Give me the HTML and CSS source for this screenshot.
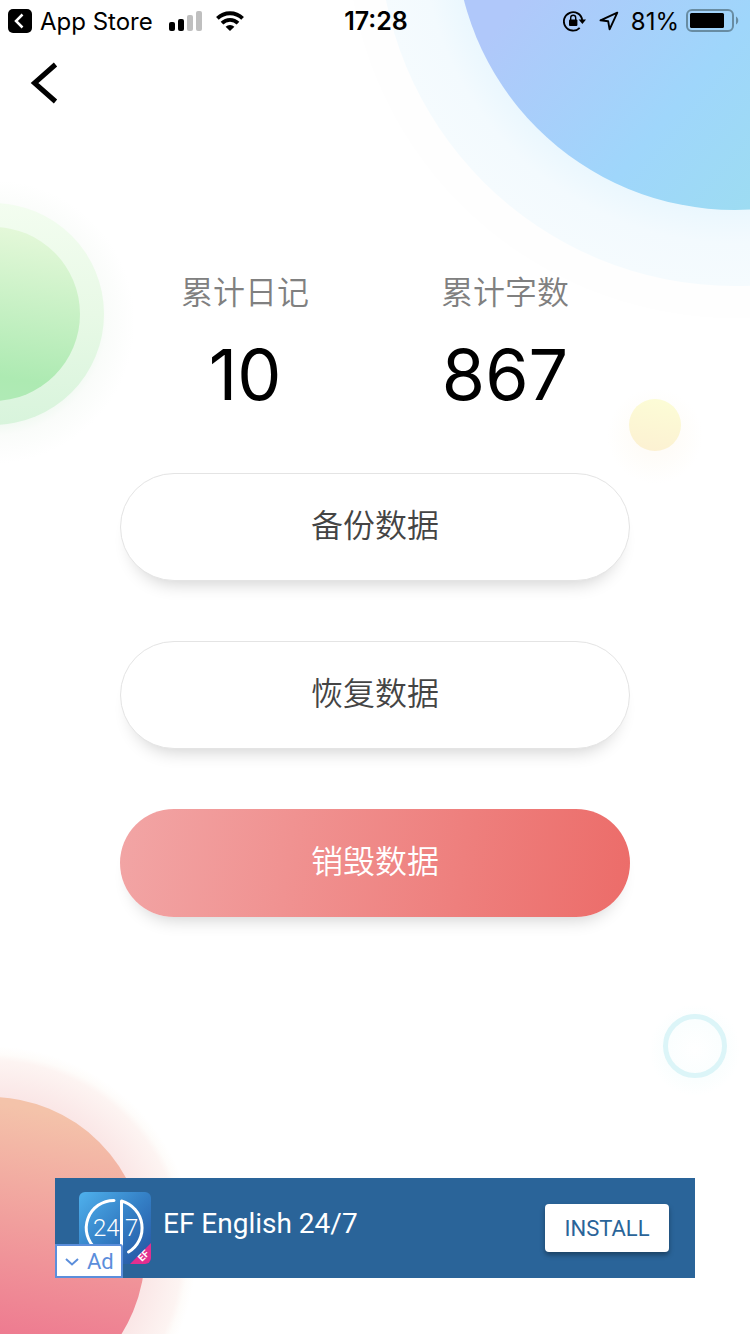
FILE: index.html
```html
<!DOCTYPE html>
<html lang="zh-CN">
<head>
<meta charset="utf-8">
<meta name="viewport" content="width=device-width, initial-scale=1">
<title>数据</title>
<link rel="stylesheet" href="styles.css">
</head>
<body>
<div class="app">
  <svg class="backdrop" viewBox="0 0 750 1334" preserveAspectRatio="xMidYMid slice" aria-hidden="true">
    <defs>
      <linearGradient id="blue" gradientUnits="userSpaceOnUse" x1="520" y1="0" x2="760" y2="200">
        <stop offset="0" stop-color="#b0c8fa"/><stop offset=".6" stop-color="#9fd6fb"/><stop offset="1" stop-color="#9ddcf2"/>
      </linearGradient>
      <radialGradient id="blueHalo" gradientUnits="userSpaceOnUse" cx="735" cy="-70" r="356">
        <stop offset=".78" stop-color="#eaf7fe"/><stop offset=".88" stop-color="#f3fafe"/><stop offset="1" stop-color="#f5fbfe"/>
      </radialGradient>
      <linearGradient id="green" x1=".6" y1="0" x2=".45" y2="1">
        <stop offset="0" stop-color="#e4f8d9"/><stop offset=".85" stop-color="#adeab2"/><stop offset="1" stop-color="#b0eab6"/>
      </linearGradient>
      <linearGradient id="greenHalo" x1=".5" y1="0" x2=".5" y2="1">
        <stop offset="0" stop-color="#f3fdf0"/><stop offset=".5" stop-color="#e8f9e6"/><stop offset="1" stop-color="#d8f4dc"/>
      </linearGradient>
      <radialGradient id="greenGlow">
        <stop offset=".7" stop-color="#f0f9f1"/><stop offset=".8" stop-color="#fafcfa"/><stop offset="1" stop-color="#fff"/>
      </radialGradient>
      <linearGradient id="yellow" x1=".6" y1="0" x2=".4" y2="1">
        <stop offset="0" stop-color="#fcfcd6"/><stop offset="1" stop-color="#fcf1d2"/>
      </linearGradient>
      <radialGradient id="yellowGlow">
        <stop offset=".4" stop-color="#fefcf8"/><stop offset="1" stop-color="#fff"/>
      </radialGradient>
      <linearGradient id="red" gradientUnits="userSpaceOnUse" x1="40" y1="1110" x2="0" y2="1334">
        <stop offset="0" stop-color="#f4c3aa"/><stop offset="1" stop-color="#ee7b90"/>
      </linearGradient>
      <radialGradient id="redHalo" gradientUnits="userSpaceOnUse" cx="-10" cy="1252" r="206">
        <stop offset=".75" stop-color="#fae6e6"/><stop offset=".93" stop-color="#fdf4f2"/><stop offset=".96" stop-color="#fefcfa"/><stop offset="1" stop-color="#fff"/>
      </radialGradient>
      <radialGradient id="ringGlow">
        <stop offset="0" stop-color="#fff"/><stop offset=".65" stop-color="#fafefe"/><stop offset="1" stop-color="#fff"/>
      </radialGradient>
    </defs>
    <circle cx="735" cy="-70" r="388" fill="#fefefe"/>
    <circle cx="735" cy="-70" r="356" fill="url(#blueHalo)"/>
    <circle cx="735" cy="-70" r="280" fill="url(#blue)"/>
    <circle cx="-7" cy="322" r="142" fill="url(#greenGlow)"/>
    <circle cx="-7" cy="314" r="111" fill="url(#greenHalo)"/>
    <circle cx="-7" cy="314" r="87" fill="url(#green)"/>
    <circle cx="655" cy="436" r="48" fill="url(#yellowGlow)"/>
    <circle cx="655" cy="425" r="26" fill="url(#yellow)"/>
    <circle cx="695" cy="1050" r="46" fill="url(#ringGlow)"/>
    <circle cx="695" cy="1046" r="29.5" fill="none" stroke="#dcf5f8" stroke-width="5"/>
    <circle cx="-10" cy="1252" r="206" fill="url(#redHalo)"/>
    <circle cx="-10" cy="1252" r="155" fill="url(#red)"/>
  </svg>

  <header class="status">
    <div class="status-side">
      <svg width="24" height="24" viewBox="0 0 24 24" aria-hidden="true"><rect width="24" height="24" rx="5"/><path d="M14.500 5.500 8 12l6.500 6.500" fill="none" stroke="#fff" stroke-width="2.500"/></svg>
      <span class="status-app">App Store</span>
      <svg class="signal" width="34" height="20" viewBox="0 0 34 20" aria-hidden="true"><rect y="11" width="6" height="9" rx="2"/><rect x="9" y="8" width="6" height="12" rx="2"/><g fill="#bfbfbf"><rect x="18" y="4" width="6" height="16" rx="2"/><rect x="27" width="6" height="20" rx="2"/></g></svg>
      <svg class="wifi" width="28" height="20" viewBox="0 0 28 20" aria-hidden="true"><g fill="none" stroke="#000" stroke-width="3.800"><path d="M1.400 7.400a18 18 0 0 1 25.200 0"/><path d="M6 12.200a11.400 11.400 0 0 1 16 0"/></g><path d="m14 20-4.400-4.200a6.200 6.200 0 0 1 8.800 0z"/></svg>
    </div>
    <time class="status-time">17:28</time>
    <div class="status-side status-end">
      <svg width="24" height="22" viewBox="0 0 24 22" aria-hidden="true"><path d="M16.700 17.800A9.200 9.200 0 1 1 19.200 10" fill="none" stroke="#000" stroke-width="1.900"/><path d="M15.600 9.500h7.400l-3.600 4.500z"/><rect x="6" y="9.500" width="8.400" height="6.500" rx="1"/><path d="M7.700 10V7.800a2.500 2.500 0 0 1 5 0V10" fill="none" stroke="#000" stroke-width="1.400"/></svg>
      <svg class="locate" width="20" height="20" viewBox="0 0 20 20" aria-hidden="true"><path d="M18.300 1.700 1.500 9.300l7.700 1 1.400 8z" fill="none" stroke="#000" stroke-width="1.900" stroke-linejoin="round"/></svg>
      <span class="status-percent">81%</span>
      <svg width="54" height="24" viewBox="0 0 54 24" aria-hidden="true"><rect x="1" y="1" width="46" height="21" rx="5" fill="none" stroke="#688ca2" stroke-width="2"/><rect x="4" y="4" width="34" height="15" rx="1.500"/><path d="M50 7.500c3 1.500 3 6.500 0 8z" fill="#688ca2"/></svg>
    </div>
  </header>

  <nav class="nav">
    <button class="back" type="button" aria-label="返回"><svg width="28" height="42" viewBox="0 0 28 42" aria-hidden="true"><path d="M25.500 2.500 4.500 21l21 18.500" fill="none" stroke="#000" stroke-width="5"/></svg></button>
  </nav>

  <main class="main">
    <dl class="stats">
      <div class="stat"><dt class="stat-label">累计日记</dt><dd class="stat-value">10</dd></div>
      <div class="stat"><dt class="stat-label">累计字数</dt><dd class="stat-value">867</dd></div>
    </dl>
    <div class="actions">
      <button class="action" type="button">备份数据</button>
      <button class="action" type="button">恢复数据</button>
      <button class="action action-danger" type="button">销毁数据</button>
    </div>
  </main>

  <aside class="banner">
    <svg class="banner-icon" width="72" height="72" viewBox="0 0 72 72" aria-hidden="true">
      <defs>
        <linearGradient id="tile" x1="0" y1="0" x2="1" y2="1"><stop offset="0" stop-color="#4fb1ed"/><stop offset=".5" stop-color="#347fc5"/><stop offset="1" stop-color="#2452a0"/></linearGradient>
        <clipPath id="tileClip"><rect width="72" height="72" rx="6"/></clipPath>
      </defs>
      <g clip-path="url(#tileClip)">
        <rect width="72" height="72" fill="url(#tile)"/>
        <path d="M72 51v21H51z" fill="#e22f8f"/>
      </g>
      <path d="M35 8.500A27.500 27.500 0 0 0 17 57M42.500 60V9A28 28 0 0 1 49.500 60" fill="none" stroke="#fff" stroke-width="3" stroke-linecap="round" stroke-linejoin="round"/>
      <g class="tile-digits"><text x="14" y="44">24</text><text x="46" y="44">7</text></g>
      <text class="tile-brand" x="63" y="70" transform="rotate(-45 63 70)">EF</text>
    </svg>
    <span class="banner-title">EF English 24/7</span>
    <button class="install" type="button">INSTALL</button>
    <button class="ad-tag" type="button"><svg width="14" height="10" viewBox="0 0 14 10" aria-hidden="true"><path d="m1 2 6 5.500L13 2" fill="none" stroke="#5b8edb" stroke-width="2"/></svg>Ad</button>
  </aside>
</div>
</body>
</html>
```
FILE: styles.css
```css
* { box-sizing: border-box; }

body {
  margin: 0;
  background: #fff;
  color: #000;
  font-family: Inter, "Noto Sans CJK SC", sans-serif;
}

button {
  margin: 0;
  padding: 0;
  border: 0;
  background: none;
  font: inherit;
  cursor: pointer;
}

svg { display: block; flex: none; }

.app {
  position: relative;
  isolation: isolate;
  display: flex;
  flex-direction: column;
  min-height: 100vh;
  padding-bottom: 56px;
  overflow: hidden;
}

.backdrop {
  position: absolute;
  inset: 0;
  z-index: -1;
  width: 100%;
  height: 100%;
}

.status {
  display: grid;
  grid-template-columns: 1fr auto 1fr;
  align-items: center;
  height: 42px;
  padding: 0 10px 0 8px;
  font-size: 24px;
}

.status-side { display: flex; align-items: center; }
.status-end { justify-content: flex-end; }
.status-app { margin: 0 16px 0 8px; }
.wifi { margin-left: 13px; }
.status-time { padding-left: 4px; font-size: 25px; font-weight: 600; }
.locate { margin-left: 12px; }
.status-percent { margin: 0 7px 0 12px; }

.nav { padding: 20px 30px 0; }
.back { display: block; }

.main {
  display: flex;
  flex-direction: column;
  align-items: center;
  padding: 169px 40px 60px;
}

.stats {
  display: grid;
  grid-template-columns: 1fr 1fr;
  width: 100%;
  max-width: 520px;
  margin: 0;
  text-align: center;
}

.stat-label {
  color: #808080;
  font-size: 32px;
  font-weight: 350;
  line-height: 40px;
}

.stat-value {
  margin: 20px 0 0;
  font-size: 70px;
  line-height: 84px;
}

.actions {
  display: grid;
  gap: 60px;
  width: 100%;
  max-width: 510px;
  margin-top: 56px;
}

.action {
  height: 108px;
  padding-bottom: 8px;
  border: 1px solid #e4e4e4;
  border-radius: 54px;
  background: #fff;
  box-shadow: 0 14px 18px -12px rgba(0, 0, 0, 0.2);
  color: #444;
  font-size: 32px;
  font-weight: 350;
}

.action-danger {
  border: 0;
  background: linear-gradient(98deg, #f2a5a5, #ec6c69);
  color: #fff;
}

.banner {
  position: relative;
  display: flex;
  align-items: center;
  width: calc(100% - 40px);
  max-width: 640px;
  height: 100px;
  margin: auto auto 0;
  padding: 0 26px 0 24px;
  background: #2a6499;
  font-family: Roboto, sans-serif;
}

.tile-digits { fill: #fff; font-size: 24px; font-weight: 300; }
.tile-brand { fill: #fff; font-size: 10px; font-weight: 700; }

.banner-title {
  flex: 1;
  margin-left: 12px;
  padding-bottom: 10px;
  color: #fff;
  font-size: 28px;
}

.install {
  width: 124px;
  height: 48px;
  border-radius: 4px;
  background: #fff;
  box-shadow: 0 3px 5px rgba(0, 0, 0, 0.35);
  color: #2a6499;
  font-size: 22px;
}

.ad-tag {
  position: absolute;
  bottom: 0;
  left: 0;
  display: flex;
  align-items: center;
  gap: 8px;
  height: 34px;
  padding: 1px 7px 0 8px;
  border: 2px solid #5b8edb;
  border-top-right-radius: 3px;
  background: #fff;
  color: #5b8edb;
  font-size: 22px;
}
```
